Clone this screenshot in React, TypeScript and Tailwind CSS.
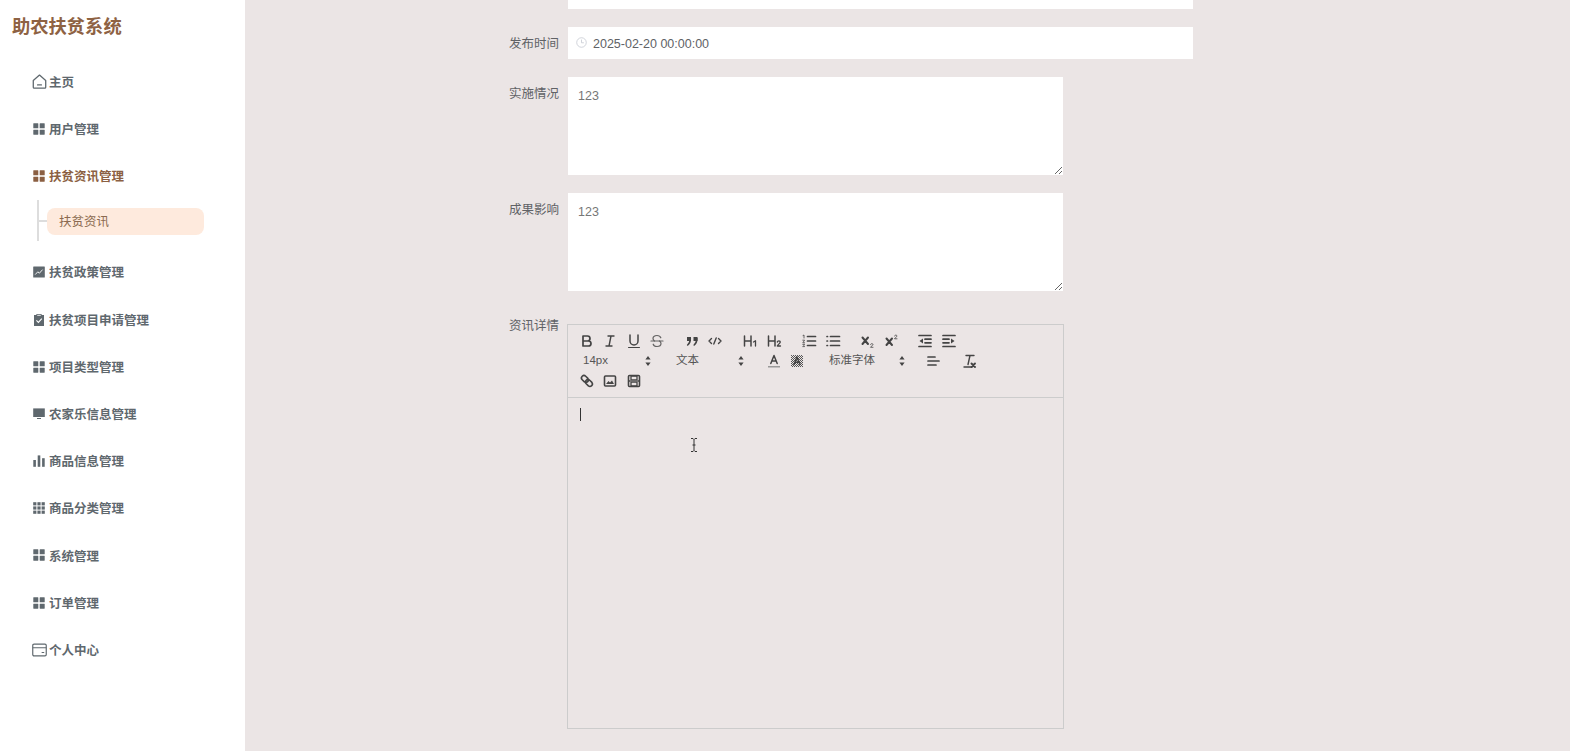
import React from 'react';

const s = { fill: 'none', stroke: 'currentColor', strokeWidth: 2, strokeLinecap: 'round' as const, strokeLinejoin: 'round' as const };

const Grid4 = () => (
  <svg viewBox="0 0 12 12" className="w-3 h-3 ml-px" fill="currentColor">
    <rect x="0.3" y="0.3" width="5" height="5" rx="0.4" />
    <rect x="6.7" y="0.3" width="5" height="5" rx="0.4" />
    <rect x="0.3" y="6.7" width="5" height="5" rx="0.4" />
    <rect x="6.7" y="6.7" width="5" height="5" rx="0.4" />
  </svg>
);

const Grid9 = () => (
  <svg viewBox="0 0 12 12" className="w-3 h-3 ml-px" fill="currentColor">
    {[0.2, 4.4, 8.6].map((y) =>
      [0.2, 4.4, 8.6].map((x) => <rect key={`${x}-${y}`} x={x} y={y} width="3.2" height="3.2" />)
    )}
  </svg>
);

const HomeIcon = () => (
  <svg viewBox="0 0 14 14" className="w-[15px] h-[15px]" fill="none" stroke="currentColor" strokeWidth="1.2" strokeLinejoin="round" strokeLinecap="round">
    <path d="M1.2 6 7 1 12.8 6v6.4a.8.8 0 0 1-.8.8H2a.8.8 0 0 1-.8-.8Z" />
    <path d="M5.2 10.2h3.6" />
  </svg>
);

const ChartIcon = () => (
  <svg viewBox="0 0 12 12" className="w-3 h-3 ml-px">
    <rect x="0.2" y="0.6" width="11.6" height="10.8" rx="0.5" fill="currentColor" />
    <path d="M2.2 8.6 4.8 5.8 6.4 7.2 9.6 3.6" fill="none" stroke="#fff" strokeWidth="0.9" />
  </svg>
);

const ClipboardIcon = () => (
  <svg viewBox="0 0 12 13" className="w-3 h-[13px] ml-px">
    <path d="M1 2h2.4V1h5.2v1H11v11H1Z" fill="currentColor" />
    <rect x="4.2" y="1.8" width="3.6" height="0.9" fill="#fff" />
    <path d="M3.4 7.4 5.4 9.4 8.8 5.6" fill="none" stroke="#fff" strokeWidth="1.1" />
  </svg>
);

const MonitorIcon = () => (
  <svg viewBox="0 0 12 12" className="w-3 h-3 ml-px" fill="currentColor">
    <rect x="0.2" y="0.4" width="11.6" height="8.6" />
    <rect x="4" y="10" width="4" height="1" />
  </svg>
);

const BarsIcon = () => (
  <svg viewBox="0 0 12 12" className="w-3 h-3 ml-px" fill="currentColor">
    <rect x="0.3" y="5" width="2.6" height="6.8" />
    <rect x="4.7" y="0.4" width="2.6" height="11.4" />
    <rect x="9.1" y="3.2" width="2.6" height="8.6" />
  </svg>
);

const CardIcon = () => (
  <svg viewBox="0 0 14 13" className="w-[15px] h-[14px]" fill="none" stroke="currentColor" strokeWidth="1.1">
    <rect x="0.7" y="1" width="12.6" height="11" rx="1.2" />
    <path d="M0.7 4.4h12.6M9 8.8h2.4" />
  </svg>
);

const menuTop = [
  { label: '主页', icon: <HomeIcon /> },
  { label: '用户管理', icon: <Grid4 /> },
];

const menuBottom = [
  { label: '扶贫政策管理', icon: <ChartIcon /> },
  { label: '扶贫项目申请管理', icon: <ClipboardIcon /> },
  { label: '项目类型管理', icon: <Grid4 /> },
  { label: '农家乐信息管理', icon: <MonitorIcon /> },
  { label: '商品信息管理', icon: <BarsIcon /> },
  { label: '商品分类管理', icon: <Grid9 /> },
  { label: '系统管理', icon: <Grid4 /> },
  { label: '订单管理', icon: <Grid4 /> },
  { label: '个人中心', icon: <CardIcon /> },
];

const MenuRow = ({ label, icon, active }: { label: string; icon: React.ReactNode; active?: boolean }) => (
  <div className={`flex items-center h-[47.2px] pl-8 font-bold text-[12.5px] ${active ? 'text-[#8b5f42]' : 'text-[#5f686e]'}`}>
    <span className="w-[17px] flex items-center justify-start pb-[3px]">{icon}</span>
    <span>{label}</span>
  </div>
);

const Tool = ({ children }: { children: React.ReactNode }) => (
  <span className="w-[23.5px] h-5 flex items-center justify-center text-[#444]">
    <svg viewBox="0 0 18 18" className="w-[18px] h-[18px]">{children}</svg>
  </span>
);

const Picker = ({ label, className }: { label: string; className: string }) => (
  <span className={`h-5 flex items-center justify-between pl-2 pr-[3px] text-[11.5px] text-[#555] ${className}`}>
    <span>{label}</span>
    <svg viewBox="0 0 8 12" className="w-2 h-3 text-[#444]" fill="currentColor">
      <path d="M4 1 6.6 4.6H1.4ZM4 11 1.4 7.4H6.6Z" />
    </svg>
  </span>
);

const Field = ({ label, children }: { label: string; children: React.ReactNode }) => (
  <div className="flex">
    <label className="w-20 h-8 shrink-0 text-right leading-[34px] text-[12.5px] text-[#606266]">{label}</label>
    <div className="ml-[9px]">{children}</div>
  </div>
);

const Area = () => (
  <textarea
    readOnly
    defaultValue="123"
    className="block w-[495px] h-[98px] bg-white px-[10px] py-[9px] text-[12.5px] leading-5 text-[#777] outline-none resize-y"
  />
);

export default function App() {
  return (
    <div className="flex h-screen overflow-hidden bg-[#ebe5e5] font-['Liberation_Sans','Noto_Sans_CJK_SC',sans-serif]">
      <aside className="w-[244.5px] shrink-0 bg-white">
        <div className="h-[59.6px] pl-3 pt-[14px] text-[18.3px] leading-[26px] font-bold text-[#8e6243]">助农扶贫系统</div>
        {menuTop.map((m) => (
          <MenuRow key={m.label} {...m} />
        ))}
        <MenuRow label="扶贫资讯管理" icon={<Grid4 />} active />
        <div className="h-[49px] flex -mt-[2px] mb-[2px]">
          <div className="ml-[37px] mt-[1px] w-[2px] h-[41px] bg-[#ddd]" />
          <div className="mt-[21px] w-2 h-[2px] bg-[#ddd]" />
          <div className="mt-[9px] w-[157px] h-[27px] rounded-[8px] bg-[#feeadd] pl-3 pt-px text-[12.5px] leading-[27px] text-[#8b6a50]">扶贫资讯</div>
        </div>
        {menuBottom.map((m) => (
          <MenuRow key={m.label} {...m} />
        ))}
      </aside>

      <main className="relative flex-1 pl-[234.5px]">
        <div className="ml-[89px] w-[625px] h-[9px] bg-white" />
        <div className="flex flex-col gap-[18px] mt-[18px]">
          <Field label="发布时间">
            <div className="w-[625px] h-8 bg-white flex items-center pl-[8px] pt-[2px] text-[12.5px] text-[#606266]">
              <svg viewBox="0 0 12 12" className="w-[11px] h-[11px] mr-[6px] -mt-[3px] text-[#c7cbd3]" fill="none" stroke="currentColor" strokeWidth="0.9">
                <circle cx="6" cy="6" r="5.2" />
                <path d="M6 2.8V6.3H8.6" />
              </svg>
              2025-02-20 00:00:00
            </div>
          </Field>
          <Field label="实施情况"><Area /></Field>
          <Field label="成果影响"><Area /></Field>
          <Field label="资讯详情">
            <div className="mt-[15px] -ml-px w-[497px] h-[405px] border border-[#ccc] flex flex-col">
              <div className="h-[73px] shrink-0 border-b border-[#ccc] pl-[7px] pt-[6px]">
                <div className="flex h-5">
                  <Tool><g {...s} strokeWidth={1.7}><path d="M5 4h4.5a2.5 2.5 0 0 1 0 5H5ZM5 9h5.5a2.5 2.5 0 0 1 0 5H5Z" /></g></Tool>
                  <Tool><g {...s} strokeWidth={1.4}><path d="M7 4h6M5 14h6M8 14l2-10" /></g></Tool>
                  <Tool><g {...s} strokeWidth={1.5}><path d="M5 3v6a4 4 0 0 0 8 0V3" /><path d="M3.5 15.5h11" strokeWidth={1} /></g></Tool>
                  <Tool><g {...s} strokeWidth={1.2} opacity={0.8}><path d="M3 9h12" /><path d="M12.8 5.8C12.3 4.3 10.8 3.5 9 3.5c-2.3 0-4 1.2-4 3 0 1 .5 1.8 1.5 2.5M5.2 12.2C5.7 13.7 7.2 14.5 9 14.5c2.3 0 4-1.2 4-3 0-1-.5-1.8-1.5-2.5" /></g></Tool>
                  <span className="w-[11px]" />
                  <Tool><g fill="#444"><rect x="4" y="5" width="4" height="4" /><rect x="10.5" y="5" width="4" height="4" /></g><g {...s} strokeWidth={1.6}><path d="M7.3 6.5C7.3 9.5 6.5 11.5 4.7 13M13.8 6.5C13.8 9.5 13 11.5 11.2 13" /></g></Tool>
                  <Tool><g {...s} strokeWidth={1.4}><path d="M5.5 6.5 3 9l2.5 2.5M12.5 6.5 15 9l-2.5 2.5M10.2 6 7.8 12" /></g></Tool>
                  <span className="w-[12.5px]" />
                  <Tool><g {...s} strokeWidth={1.5}><path d="M2.5 4v10M9 4v10M2.5 9H9" /><path d="M11.5 10l2-1.2V14" strokeWidth={1.3} /></g></Tool>
                  <Tool><g {...s} strokeWidth={1.5}><path d="M2.5 4v10M9 4v10M2.5 9H9" /><path d="M11.3 10c.3-1.5 3-1.5 3 0 0 1.2-2.2 2.2-3 4h3.2" strokeWidth={1.3} /></g></Tool>
                  <span className="w-[11px]" />
                  <Tool><g {...s} strokeWidth={1.7}><path d="M7.5 4.5h8M7.5 9h8M7.5 13.5h8" /><path d="M3 3.5l1-.5v3M2.8 8.2h1.8L2.8 10.8h1.8M2.8 12.4h1.8l-.8 1 .8 1.2H2.8" strokeWidth={0.8} /></g></Tool>
                  <Tool><g {...s} strokeWidth={1.7}><path d="M6.5 4.5h9M6.5 9h9M6.5 13.5h9M3 4.5h.5M3 9h.5M3 13.5h.5" /></g></Tool>
                  <span className="w-[11px]" />
                  <Tool><g {...s} strokeWidth={2}><path d="M4.5 5.5l5.5 6.5M10 5.5l-5.5 6.5" /><path d="M12.5 12.5c0-1.2 2.5-1.2 2.5 0 0 .9-1.8 1.5-2.5 2.8H15" strokeWidth={0.8} /></g></Tool>
                  <Tool><g {...s} strokeWidth={2}><path d="M4.5 6.5l5.5 6.5M10 6.5l-5.5 6.5" /><path d="M12.5 4c0-1.2 2.5-1.2 2.5 0 0 .9-1.8 1.5-2.5 2.8H15" strokeWidth={0.8} /></g></Tool>
                  <span className="w-[11px]" />
                  <Tool><g {...s} strokeWidth={1.7}><path d="M3 3.5h12M9 7.2h6M9 10.8h6M3 14.5h12" /></g><path d="M7 6.5v5L3.5 9Z" fill="#444" /></Tool>
                  <Tool><g {...s} strokeWidth={1.7}><path d="M3 3.5h12M3 7.2h6M3 10.8h6M3 14.5h12" /></g><path d="M11 6.5v5L14.5 9Z" fill="#444" /></Tool>
                </div>
                <div className="flex h-5">
                  <Picker label="14px" className="w-20" />
                  <span className="w-[13px]" />
                  <Picker label="文本" className="w-20" />
                  <span className="w-[14px]" />
                  <Tool><g {...s} strokeWidth={1.5}><path d="M5.8 11.5 9 3.5l3.2 8M6.8 9h4.4" /></g><rect x="3" y="14" width="12" height="1.5" fill="#999" /></Tool>
                  <Tool>
                    <pattern id="hatch" width="2" height="2" patternUnits="userSpaceOnUse">
                      <rect width="1" height="1" fill="#555" />
                      <rect x="1" y="1" width="1" height="1" fill="#555" />
                    </pattern>
                    <rect x="3" y="3" width="12" height="12" fill="url(#hatch)" />
                    <g {...s} strokeWidth={1.5}><path d="M6 12.5 9 5l3 7.5M7 10.2h4" /></g>
                  </Tool>
                  <span className="w-[12px]" />
                  <Picker label="标准字体" className="w-[88px]" />
                  <span className="w-[12px]" />
                  <Tool><g {...s} strokeWidth={1.7}><path d="M4 5h7M4 9h11M4 13h8" /></g></Tool>
                  <span className="w-[12.5px]" />
                  <Tool><g {...s} strokeWidth={1.4}><path d="M6 3.5h8M10 3.5 8 12.5M4 15h8" /><path d="M11.5 11.5l3.5 3.5M15 11.5l-3.5 3.5" strokeWidth={1.9} /></g></Tool>
                </div>
                <div className="flex h-5">
                  <Tool><g {...s} strokeWidth={1.6}><path d="M4.2 4.2a2.5 2.5 0 0 1 3.5 0l2.2 2.2a2.5 2.5 0 0 1-3.500 3.500L4.200 7.700a2.500 2.500 0 0 1 0-3.500ZM8.200 8.200a2.500 2.500 0 0 1 3.500 0l2.200 2.200a2.500 2.500 0 0 1-3.500 3.500l-2.200-2.200a2.500 2.500 0 0 1 0-3.500Z" /></g></Tool>
                  <Tool><rect x="3.5" y="4" width="11" height="10" rx="1" fill="none" stroke="#444" strokeWidth="1.6" /><path d="M5 12l2.5-3 1.5 1.5L11 8.5 13 12Z" fill="#444" /></Tool>
                  <Tool><rect x="3.5" y="3.5" width="11" height="11" rx="1" fill="none" stroke="#444" strokeWidth="1.6" /><path d="M6 4h6v4H6ZM6 10h6v4H6Z" fill="none" stroke="#444" strokeWidth="1.3" /><path d="M3.5 9h2M12.5 9h2" stroke="#444" strokeWidth="1.3" /></Tool>
                </div>
              </div>
              <div className="flex-1 pl-3 pt-[10px]">
                <div className="w-px h-[13px] bg-[#333]" />
              </div>
            </div>
          </Field>
        </div>
        {/* mouse pointer caught in the screenshot */}
        <svg viewBox="0 0 8 14" className="absolute left-[445px] top-[438px] w-2 h-[14px] text-[#333]" fill="none" stroke="currentColor" strokeWidth="1">
          <path d="M1 .5h2l1 1 1-1h2M4 1.5v11M1 13.5h2l1-1 1 1h2M2.5 7h3" />
        </svg>
      </main>
    </div>
  );
}
